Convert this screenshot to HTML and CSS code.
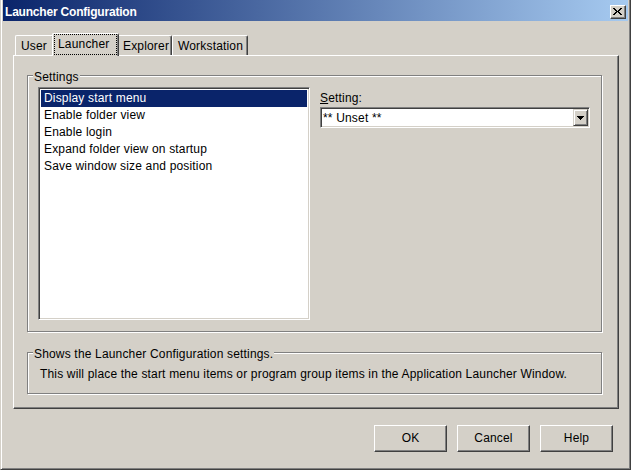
FILE: index.html
```html
<!DOCTYPE html>
<html>
<head>
<meta charset="utf-8">
<title>Launcher Configuration</title>
<link rel="stylesheet" href="styles.css">
</head>
<body>
<div class="window">
  <div class="titlebar">
    <span class="title">Launcher Configuration</span>
    <span class="close">
      <svg width="14" height="12" viewBox="0 0 14 12">
        <rect x="2" y="2" width="2" height="1"/><rect x="9" y="2" width="2" height="1"/>
        <rect x="3" y="3" width="2" height="1"/><rect x="8" y="3" width="2" height="1"/>
        <rect x="4" y="4" width="2" height="1"/><rect x="7" y="4" width="2" height="1"/>
        <rect x="5" y="5" width="3" height="1"/>
        <rect x="4" y="6" width="2" height="1"/><rect x="7" y="6" width="2" height="1"/>
        <rect x="3" y="7" width="2" height="1"/><rect x="8" y="7" width="2" height="1"/>
        <rect x="2" y="8" width="2" height="1"/><rect x="9" y="8" width="2" height="1"/>
      </svg>
    </span>
  </div>
  <div class="tabs">
    <div class="tab tab-user">User</div>
    <div class="tab tab-launcher selected"><span class="focus">Launcher</span></div>
    <div class="tab tab-explorer">Explorer</div>
    <div class="tab tab-workstation">Workstation</div>
  </div>
  <div class="panel">
    <div class="group">
      <div class="legend">Settings</div>
      <div class="settings-row">
        <div class="listbox">
          <div class="item selected">Display start menu</div>
          <div class="item">Enable folder view</div>
          <div class="item">Enable login</div>
          <div class="item">Expand folder view on startup</div>
          <div class="item">Save window size and position</div>
        </div>
        <div class="setting-col">
          <div class="setting-label"><span class="mnemonic">S</span>etting:</div>
          <div class="combo">
            <span class="combo-text">** Unset **</span>
            <span class="combo-btn">
              <svg width="7" height="4" viewBox="0 0 7 4">
                <rect x="0" y="0" width="7" height="1"/>
                <rect x="1" y="1" width="5" height="1"/>
                <rect x="2" y="2" width="3" height="1"/>
                <rect x="3" y="3" width="1" height="1"/>
              </svg>
            </span>
          </div>
        </div>
      </div>
    </div>
    <div class="group group-desc">
      <div class="legend">Shows the Launcher Configuration settings.</div>
      <div class="desc">This will place the start menu items or program group items in the Application Launcher Window.</div>
    </div>
  </div>
  <div class="buttons">
    <div class="btn">OK</div>
    <div class="btn">Cancel</div>
    <div class="btn">Help</div>
  </div>
</div>
</body>
</html>
```
FILE: styles.css
```css
* { box-sizing: border-box; }
html, body { margin: 0; padding: 0; }
body {
  width: 631px;
  height: 470px;
  overflow: hidden;
  background: #d4d0c8;
  font-family: "Liberation Sans", Arial, sans-serif;
  font-size: 12px;
  line-height: 14px;
  letter-spacing: 0.17px;
  color: #000;
}
.window {
  width: 631px;
  height: 470px;
  background: #d4d0c8;
  border-left: 1px solid #d4d0c8;
  border-right: 1px solid #404040;
  border-bottom: 1px solid #404040;
  box-shadow: inset 1px 0 #fff, inset -1px -1px #808080;
  padding: 0 2px 0 2px;
  display: flex;
  flex-direction: column;
}
.titlebar {
  height: 21px;
  flex: none;
  display: flex;
  align-items: center;
  padding: 2px 2px 0 2px;
  background: linear-gradient(to right, #0a246a, #a6caf0);
}
.title {
  color: #fff;
  font-weight: bold;
  font-size: 12px;
  letter-spacing: -0.2px;
  white-space: nowrap;
}
.close {
  margin-left: auto;
  width: 16px;
  height: 14px;
  background: #d4d0c8;
  border: 1px solid;
  border-color: #fff #404040 #404040 #fff;
  box-shadow: inset -1px -1px #808080;
  display: flex;
}
.close svg { display: block; fill: #000; }

.tabs {
  display: flex;
  align-items: flex-end;
  margin-top: 12px;
  padding-left: 12px;
  flex: none;
}
.tab {
  height: 20px;
  border-top: 1px solid #fff;
  border-left: 1px solid #fff;
  border-right: 1px solid #404040;
  box-shadow: inset -1px 0 #808080;
  border-top-left-radius: 2px;
  border-top-right-radius: 2px;
  padding: 3px 0 2px 5px;
  white-space: nowrap;
  background: #d4d0c8;
}
.tab-user { width: 39px; }
.tab-launcher { width: 67px; }
.tab-explorer { width: 55px; }
.tab-workstation { width: 76px; }
.tab.selected {
  height: 23px;
  margin: 0 -2px -1px -2px;
  padding: 0 1px 1px 1px;
  position: relative;
  z-index: 1;
}
.focus {
  display: block;
  border: 1px dotted #000;
  padding: 2px 2px 3px 3px;
}

.panel {
  margin: 0 9px 0 10px;
  border-top: 1px solid #fff;
  border-left: 1px solid #fff;
  border-right: 1px solid #404040;
  border-bottom: 1px solid #404040;
  box-shadow: inset -1px -1px #808080;
  padding: 19px 16px 14px 13px;
  flex: none;
}
.group {
  border: 1px solid #808080;
  box-shadow: inset 1px 1px #fff, 1px 1px #fff;
  padding: 0 11px 11px 0;
  display: flex;
  flex-direction: column;
}
.legend {
  align-self: flex-start;
  margin: -6px 0 0 5px;
  padding: 0 1px;
  background: #d4d0c8;
  white-space: nowrap;
}
.settings-row {
  display: flex;
  gap: 10px;
  margin: 3px 0 0 10px;
}
.listbox {
  width: 272px;
  height: 233px;
  flex: none;
  background: #fff;
  border: 1px solid;
  border-color: #808080 #fff #fff #808080;
  box-shadow: inset 1px 1px #404040, inset -1px -1px #d4d0c8;
  padding: 2px;
}
.item {
  height: 17px;
  line-height: 17px;
  padding-left: 3px;
  white-space: nowrap;
}
.item.selected {
  background: #0a246a;
  color: #fff;
}
.setting-col {
  flex: 1;
  display: flex;
  flex-direction: column;
}
.setting-label { margin-top: 4px; }
.mnemonic { text-decoration: underline; }
.combo {
  margin-top: 2px;
  height: 21px;
  background: #fff;
  border: 1px solid;
  border-color: #808080 #fff #fff #808080;
  box-shadow: inset 1px 1px #404040, inset -1px -1px #d4d0c8;
  padding: 1px;
  display: flex;
}
.combo-text {
  margin-top: 2px;
  padding-left: 1px;
  white-space: nowrap;
}
.combo-btn {
  margin-left: auto;
  width: 15px;
  height: 17px;
  background: #d4d0c8;
  border: 1px solid;
  border-color: #d4d0c8 #404040 #404040 #d4d0c8;
  box-shadow: inset 1px 1px #fff, inset -1px -1px #808080;
  display: flex;
  align-items: center;
  justify-content: center;
}
.combo-btn svg { display: block; fill: #000; }

.group-desc { margin-top: 20px; padding-bottom: 12px; }
.desc {
  margin: 6px 0 0 12px;
  white-space: nowrap;
}

.buttons {
  display: flex;
  justify-content: flex-end;
  gap: 10px;
  margin-top: 16px;
  padding-right: 15px;
  flex: none;
}
.btn {
  width: 73px;
  height: 27px;
  border: 1px solid;
  border-color: #fff #404040 #404040 #fff;
  box-shadow: inset -1px -1px #808080;
  text-align: center;
  line-height: 25px;
}
```
